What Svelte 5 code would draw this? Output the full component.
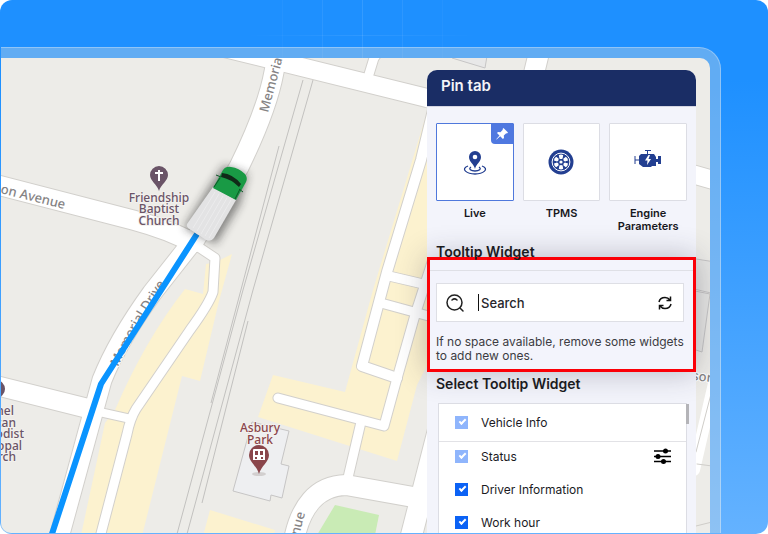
<script lang="ts">
  type Widget = { name: string; checked: boolean; locked?: boolean; settings?: boolean };

  const tabs = [
    { id: 'live', label: 'Live' },
    { id: 'tpms', label: 'TPMS' },
    { id: 'engine', label: 'Engine Parameters' }
  ];

  let active = $state('live');
  let search = $state('Search');
  let widgets = $state<Widget[]>([
    { name: 'Vehicle Info', checked: true, locked: true },
    { name: 'Status', checked: true, locked: true, settings: true },
    { name: 'Driver Information', checked: true },
    { name: 'Work hour', checked: true }
  ]);

  // [path, width]
  const roads: [string, number][] = [
    ['M387 40 L374 58 L366 84', 9],
    ['M542 40 L530 90', 20],
    ['M200 42 L427 98 L720 182', 18],
    ['M280 40 L274 72 Q267 110 239 167 L193 243', 19],
    ['M-10 183 L133 220 Q170 230 193 243', 19],
    ['M193 241 L152 293 Q118 340 102 380 L57 545', 19],
    ['M-10 384 L90 409', 19],
    ['M95 411 L131 419', 8],
    ['M194 244 L215 258 L213 292 Q209 304 190 330 L136 409 Q130 419 127 434 L98 545', 9],
    ['M433 110 L421 160 L387 272 L362 366 L397 378', 10],
    ['M436 250 L415 315 L396 382 L384 426 L278 398', 9],
    ['M389 276 L436 287', 9],
    ['M381 303 L436 318', 9],
    ['M361 422 L347 482', 9],
    ['M293 545 Q303 486 346 485 L430 500', 20],
    ['M440 424 L409 545', 21]
  ];

  const rails = [
    'M279 146 L211 403',
    'M303 80 L243 290 L177 534',
    'M313 80 L253 290 L187 534',
    'M248 321 L202 503'
  ];

  const districts = [
    { text: 'nel', x: 14, y: 415 },
    { text: 'can', x: 16, y: 427 },
    { text: 'odist', x: 24, y: 438 },
    { text: 'opal', x: 22, y: 450 },
    { text: 'rch', x: 16, y: 461 }
  ];
</script>

<main class="stage">
  <div class="grid-lines" aria-hidden="true"></div>
  <div class="frame">
    <div class="map">
      <svg class="map-canvas" viewBox="1 58 709 475" preserveAspectRatio="xMaxYMin slice" role="img" aria-label="Map">
        <defs>
          <filter id="soft" x="-50%" y="-50%" width="200%" height="200%">
            <feGaussianBlur stdDeviation="4" />
          </filter>
          <path id="memorial" d="M118 367 Q140 319 174 272" />
        </defs>
        <rect x="0" y="0" width="768" height="600" fill="#edece8" />

        <g fill="#fcf2cf">
          <path d="M232 254 L219 301 L200 381 L182 376 L141 540 L80 540 L105 423 L115 410 Q145 340 185 289 L203 294 L206 264 L216 262 Z" />
          <path d="M427 112 L373 290 L345 392 L273 375 L258 417 L397 461 L417 385 L440 340 V112 Z" />
          <path d="M210 510 L275 530 L273 540 L202 540 Z" />
        </g>
        <path d="M335 505 L379 515 L374 540 L314 540 Z" fill="#c9ebb5" />
        <g fill="#eeeff1" stroke="#c6c5c5">
          <path d="M252 422 L289 431 L281 464 L289 466 L282 498 L271 495 L270 501 L233 491 Z" />
          <path d="M452 58 L485 68 L487 56" fill="#e8e8e8" />
          <path d="M690 258 L715 262 V294 L690 288 Z M690 290 L710 294 L702 352 L690 348" fill="#e6e6e4" />
        </g>

        <g fill="none" stroke="#c2c1bf">
          {#each rails as d}
            <path {d} />
          {/each}
        </g>

        <g fill="none" stroke-linecap="round" stroke-linejoin="round">
          {#each roads as [d, width]}
            <path {d} stroke="#d2d0cc" stroke-width={width + 2} />
          {/each}
          {#each roads as [d, width]}
            <path {d} stroke="#fff" stroke-width={width} />
          {/each}
          <path d="M718 366 L694 470" stroke="#fff" stroke-width="12" />
          <path d="M711 394 L696 452 M712 466 L697 464 M712 522 L696 526" stroke="#cfcdc9" />
        </g>

        <g class="street">
          <text transform="translate(0 193) rotate(14)">on Avenue</text>
          <text transform="translate(268 113) rotate(-75)">Memoria</text>
          <text><textPath href="#memorial">Memorial Drive</textPath></text>
          <text transform="translate(299 536) rotate(-75)">nue</text>
          <text transform="translate(692 380) rotate(6)">sor</text>
        </g>

        <path d="M197 234 L101 384 L50 540" fill="none" stroke="#0a94ff" stroke-width="6" stroke-linejoin="round" />

        <g class="place church" text-anchor="middle">
          <path d="M159 191 C157 184 150 181 150 175 A9 9 0 0 1 168 175 C168 181 161 184 159 191 Z" />
          <path d="M159 170 V181 M155 173 H163" stroke="#fff" stroke-width="2" />
          <text x="159" y="202">Friendship</text>
          <text x="159" y="213">Baptist</text>
          <text x="159" y="225">Church</text>
        </g>
        <g class="place church" text-anchor="end">
          <circle cx="-4" cy="389" r="9" />
          {#each districts as { text, x, y }}
            <text {x} {y}>{text}</text>
          {/each}
        </g>
        <g class="place station" text-anchor="middle">
          <ellipse cx="259" cy="474" rx="7" ry="2" fill="#d2cfcf" />
          <path d="M259 474 C257 466 249 462 249 455 A10 10 0 0 1 269 455 C269 462 261 466 259 474 Z" />
          <path d="M254 449 h10 a1 1 0 0 1 1 1 v10 h-12 v-10 a1 1 0 0 1 1 -1 Z" fill="#fff" />
          <path d="M255 451 h3 v4 h-3 Z M260 451 h3 v4 h-3 Z M255 457 h2 v2 h-2 Z M261 457 h2 v2 h-2 Z" />
          <text x="260" y="432">Asbury</text>
          <text x="260" y="444">Park</text>
        </g>

        <!-- vehicle -->
        <path d="M224 165 L248 174 L240 204 L216 244 L184 228 L211 184 Z" fill="#222" opacity="0.5" filter="url(#soft)" />
        <path d="M213 187 L236 200 L214 238 Q211 242 206 240 L188 228 Q186 226 187 224 Z" fill="#e3e3e4" />
        <path d="M215 192 L193 228 M219 194 L197 231 M223 196 L201 234 M227 198 L205 236 M231 200 L209 238" stroke="#ececed" />
        <path d="M213 188 L223 170 Q226 166 231 167 Q239 168 245 174 Q248 178 246 182 L236 200 Z" fill="#199a45" />
        <path d="M222 173 Q233 174 241 184 L239 187 Q231 179 221 177 Z" fill="#102a18" />
        <path d="M220 178 L214 187 M240 189 L235 199 M216 175 L221 177 M243 192 L239 189" stroke="#0c5526" fill="none" />
      </svg>

      <aside class="panel">
        <h1>Pin tab</h1>

        <div class="tabs">
          {#each tabs as tab}
            <button class="tab" class:active={active === tab.id} onclick={() => (active = tab.id)}>
              <span class="tile">
                {#if tab.id === 'live'}
                  <svg width="26" height="26" viewBox="0 0 26 26">
                    <path d="M13 20 C12 15 7 13 7 8 A6 6 0 0 1 19 8 C19 13 14 15 13 20 Z" fill="#233f91" />
                    <circle cx="13" cy="8" r="2.3" fill="#fff" />
                    <path d="M9 18 C6 20 9 22 13 22 S20 20 17 18 M6 17 C-2 20 5 25 13 25 S28 20 20 17" fill="none" stroke="#233f91" stroke-width="1.3" />
                  </svg>
                {:else if tab.id === 'tpms'}
                  <svg width="26" height="26" viewBox="0 0 26 26">
                    <circle cx="13" cy="13" r="12.5" fill="#233f91" />
                    <circle cx="13" cy="13" r="8.9" fill="none" stroke="#fff" />
                    {#each [0, 60, 120, 180, 240, 300] as angle}
                      <path d="M10.8 6.2 Q13 5 15.2 6.2 L14.6 9.4 Q13 10.6 11.4 9.4 Z" fill="#fff" transform="rotate({angle} 13 13)" />
                    {/each}
                    <circle cx="13" cy="13" r="1.6" fill="#fff" />
                  </svg>
                {:else}
                  <svg width="28" height="26" viewBox="0 0 28 26">
                    <path d="M5 7 L7 5 H20 L22 8 V10 H24 V7 H27 V15 H24 V13 H22 V17 H18 L17 18 H9 L5 15 Z M13 5 V2 H14 V5 Z" fill="#233f91" />
                    <path d="M11 1.5 H17 M1 7 V15 M1 11 H5" stroke="#233f91" fill="none" />
                    <path d="M14.500 6 L11 11.500 H13.500 L13 16 L17 10 H14.500 L16 6 Z" fill="#fff" />
                  </svg>
                {/if}
                {#if active === tab.id}
                  <span class="pin">
                    <svg width="14" height="14" viewBox="0 0 14 14">
                      <path d="M8.5 1 L13 5.5 L12 6.4 L11.2 6.2 L8.8 8.6 L9 11 L7.9 12 L5.2 9.3 L1.6 12.6 L1.2 12.2 L4.5 8.6 L2 6 L3 5 L5.4 5.2 L7.8 2.8 L7.6 2 Z" fill="#fff" />
                    </svg>
                  </span>
                {/if}
              </span>
              <span class="tab-label">{tab.label}</span>
            </button>
          {/each}
        </div>

        <h2>Tooltip Widget</h2>

        <section class="highlight">
          <div class="search">
            <svg width="18" height="18" viewBox="0 0 18 18" fill="none" stroke="#222" stroke-width="1.5" stroke-linecap="round">
              <circle cx="8.5" cy="8.5" r="7.5" />
              <path d="M14 14 L17 17 M6 6 Q8.5 3.8 11 6" />
            </svg>
            <span class="caret"></span>
            <input type="text" aria-label="Search widgets" bind:value={search} />
            <button class="icon" aria-label="Refresh" onclick={() => (search = '')}>
              <svg width="14" height="14" viewBox="0 0 14 14" fill="none" stroke="#111" stroke-width="1.5">
                <path d="M1 6 Q2 1.5 7 1.5 Q10 1.5 12 4 M12.5 0.5 V4.5 H8.5 M13 8 Q12 12.5 7 12.5 Q4 12.5 2 10 M1.5 13.5 V9.5 H5.5" />
              </svg>
            </button>
          </div>
          <p>If no space available, remove some widgets to add new ones.</p>
        </section>

        <h2>Select Tooltip Widget</h2>

        <ul class="widgets">
          {#each widgets as widget}
            <li>
              <label>
                <input type="checkbox" bind:checked={widget.checked} disabled={widget.locked} />
                {widget.name}
              </label>
              {#if widget.settings}
                <button class="icon" aria-label="{widget.name} settings">
                  <svg width="17" height="16" viewBox="0 0 17 16" stroke="#000" stroke-width="1.4">
                    <path d="M0 3 H17 M0 8.500 H17 M0 13.500 H17" />
                    <circle cx="11.500" cy="3" r="1.800" />
                    <circle cx="4" cy="8.500" r="1.800" />
                    <circle cx="9.500" cy="13.500" r="1.800" />
                  </svg>
                </button>
              {/if}
            </li>
          {/each}
        </ul>
      </aside>
    </div>
  </div>
</main>

<style>
  :global(body) {
    background: #fff;
  }

  .stage {
    position: relative;
    box-sizing: border-box;
    display: flex;
    height: 100vh;
    padding: 47px 47px 1px 1px;
    overflow: hidden;
    border-radius: 12px;
    background: linear-gradient(#1e90ff 15%, #64b2ff);
    font-family: Inter, 'Liberation Sans', sans-serif;
    color: #1b1b1f;
  }

  .grid-lines {
    position: absolute;
    top: 0;
    left: 242px;
    width: 240px;
    height: 80px;
    background:
      repeating-linear-gradient(90deg, rgba(255, 255, 255, 0.1) 0 1px, transparent 1px 40px),
      linear-gradient(transparent 35px, rgba(255, 255, 255, 0.08) 35px 36px, transparent 36px);
    mask-image: linear-gradient(90deg, transparent, #000, transparent);
  }

  .frame {
    position: relative;
    box-sizing: border-box;
    display: flex;
    flex: 1;
    min-width: 0;
    padding: 10px 10px 0 0;
    border: solid rgba(255, 255, 255, 0.3);
    border-width: 1px 1px 0 0;
    border-radius: 0 22px 0 0;
    background: rgba(216, 222, 222, 0.36);
  }

  .map {
    position: relative;
    display: flex;
    flex: 1;
    justify-content: flex-end;
    min-width: 0;
    padding: 12px 14px 0 0;
    overflow: hidden;
    border-radius: 0 10px 0 10px;
  }

  .map-canvas {
    position: absolute;
    inset: 0;
    width: 100%;
    height: 100%;
  }

  .street,
  .place {
    font-family: 'Noto Sans', sans-serif;
    font-weight: 500;
    stroke-linejoin: round;
  }

  .street {
    font-size: 13px;
  }

  .place {
    font-size: 12px;
  }

  .street text {
    fill: #858384;
    stroke: #fff;
    stroke-width: 2px;
    paint-order: stroke;
  }

  .place text {
    stroke: #f3f1ee;
    stroke-width: 2px;
    paint-order: stroke;
  }

  .church {
    fill: #6a5467;
  }

  .station {
    fill: #8a464b;
  }

  .panel {
    position: relative;
    flex: 0 0 269px;
    min-width: 0;
    border-radius: 10px 10px 0 0;
    background: #f3f4fb;
  }

  h1 {
    margin: 0;
    padding: 6px 14px 10px;
    border-bottom: 1px solid #d4d5e2;
    border-radius: 10px 10px 0 0;
    background: #1a2d65;
    color: #f4f4f8;
    font-size: 15px;
    font-weight: 600;
    line-height: 20px;
  }

  .tabs {
    display: grid;
    grid-template-columns: repeat(3, 1fr);
    gap: 9px;
    padding: 16px 9px 0;
  }

  .tab {
    display: flex;
    flex-direction: column;
    gap: 6px;
    min-width: 0;
    padding: 0;
    border: 0;
    background: none;
    color: #17171c;
    font: 600 11px/13px Inter, sans-serif;
    cursor: pointer;
  }

  .tile {
    position: relative;
    box-sizing: border-box;
    display: flex;
    align-items: center;
    justify-content: center;
    width: 100%;
    height: 78px;
    border: 1px solid #dcdde4;
    border-radius: 1px;
    background: #fff;
  }

  .active .tile {
    border-color: #4f78dc;
  }

  .pin {
    position: absolute;
    top: 0;
    right: 0;
    display: flex;
    align-items: center;
    justify-content: center;
    width: 22px;
    height: 20px;
    border-radius: 0 0 0 4px;
    background: #4f78e0;
  }

  .tab-label {
    align-self: center;
  }

  h2 {
    margin: 0;
    padding: 0 9px;
    font-size: 14px;
    font-weight: 600;
    line-height: 24px;
  }

  .tabs + h2 {
    padding-top: 14px;
    line-height: 10px;
  }

  .highlight {
    border: 3px solid #fb0007;
    background: #f3f4fc;
    box-shadow: 0 0 28px rgba(40, 40, 60, 0.3);
  }

  .highlight::before {
    content: '';
    display: block;
    height: 10px;
    border-bottom: 1px solid #dfe0e6;
  }

  .search {
    display: flex;
    align-items: center;
    height: 37px;
    margin: 12px 9px 0 6px;
    padding: 0 11px 0 9px;
    border: 1px solid #dedfe5;
    background: #fff;
  }

  .caret {
    width: 1px;
    height: 17px;
    margin-left: 14px;
    background: #111;
  }

  .search input {
    flex: 1;
    min-width: 0;
    padding: 0 2px;
    border: 0;
    outline: 0;
    background: none;
    color: #26262b;
    font: 500 13px/18px Inter, sans-serif;
  }

  .icon {
    display: flex;
    padding: 0;
    border: 0;
    background: none;
    cursor: pointer;
  }

  .highlight p {
    margin: 13px 9px 6px 6px;
    color: #3c3c42;
    font-size: 12px;
    line-height: 14px;
  }

  .widgets {
    position: relative;
    margin: 7px 9px 0 11px;
    padding: 0;
    border: 1px solid #dcdde4;
    background: #fff;
    list-style: none;
  }

  /* scroll thumb */
  .widgets::after {
    content: '';
    position: absolute;
    top: 0;
    right: -3px;
    width: 3px;
    height: 20px;
    background: #b4b4b8;
  }

  li {
    display: flex;
    align-items: center;
    justify-content: space-between;
    height: 28px;
    margin-bottom: 5px;
    padding: 0 15px 0 16px;
    font-size: 12px;
  }

  li:first-child {
    height: 37px;
    margin: 0;
    border-bottom: 1px solid #e2e2e6;
  }

  label {
    display: flex;
    align-items: center;
    gap: 13px;
  }

  label input {
    position: relative;
    width: 13px;
    height: 13px;
    margin: 0;
    appearance: none;
    border: 1px solid #0b62f5;
    background: #fff;
  }

  label input:disabled {
    border-color: #8fb5fc;
  }

  label input:checked {
    background: #0b62f5;
  }

  label input:checked:disabled {
    background: #8fb5fc;
  }

  label input:checked::after {
    content: '';
    position: absolute;
    top: 2px;
    left: 3px;
    width: 5px;
    height: 2px;
    border: solid #fff;
    border-width: 0 0 2px 2px;
    transform: rotate(-45deg);
  }
</style>
